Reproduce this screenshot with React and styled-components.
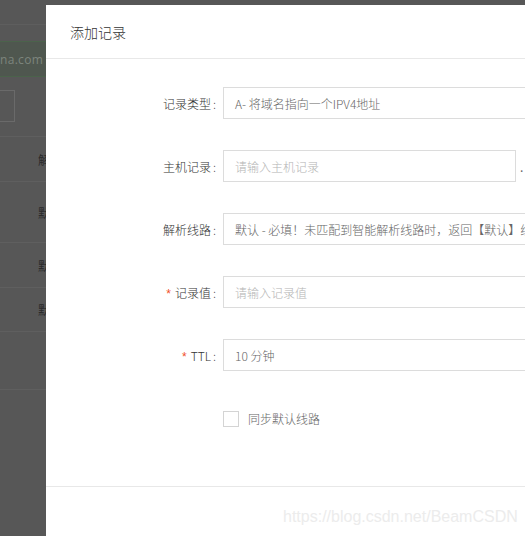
import React from "react";
import styled, { createGlobalStyle } from "styled-components";

const Global = createGlobalStyle`
  html, body { margin: 0; padding: 0; }
  body {
    width: 525px; height: 536px; overflow: hidden;
    font-family: "Noto Sans CJK SC", "Noto Sans", Arial, sans-serif;
    background: #565656;
  }
`;

const Page = styled.div`
  position: relative;
  width: 525px;
  height: 536px;
  overflow: hidden;
  background: #575757;
`;

const BgTop = styled.div`
  height: 24px;
  border-bottom: 1px solid #5e5e5e;
`;

const BgDomain = styled.div`
  margin-top: 16px;
  height: 34px;
  background: #4f574f;
  border-top: 1px solid #4b634b;
  border-bottom: 1px solid #4b634b;
  display: flex;
  align-items: center;
  font-family: "Open Sans", "Liberation Sans", sans-serif;
  font-size: 12px;
  color: #7d857d;
  letter-spacing: 0.3px;
`;

const BgInput = styled.div`
  margin-top: 13px;
  width: 14px;
  height: 30px;
  border: 1px solid #6a6a6a;
  border-left: none;
`;

const BgTable = styled.div`
  margin-top: 14px;
  border-top: 1px solid #5f5f5f;
`;

const BgRow = styled.div`
  height: ${(p) => p.$h}px;
  border-bottom: 1px solid #5f5f5f;
  display: flex;
  align-items: center;
  padding-left: 38px;
  font-size: 12px;
  color: #2a2a2a;
`;

const Overlay = styled.div`
  position: absolute;
  inset: 0;
`;

const Modal = styled.div`
  position: absolute;
  left: 46px;
  top: 5px;
  width: 620px;
  height: 600px;
  background: #fff;
  display: flex;
  flex-direction: column;
`;

const Header = styled.div`
  height: 53px;
  border-bottom: 1px solid #e8e8e8;
  display: flex;
  align-items: center;
  padding-left: 24px;
  font-size: 14px;
  font-weight: 300;
  color: #333;
`;

const Body = styled.div`
  padding-top: 28px;
  height: 427px;
  display: flex;
  flex-direction: column;
  gap: 31px;
  box-sizing: border-box;
`;

const Row = styled.div`
  display: flex;
  align-items: center;
  height: 32px;
`;

const Label = styled.div`
  width: 177px;
  flex-shrink: 0;
  box-sizing: border-box;
  text-align: right;
  padding-right: 7px;
  font-size: 12px;
  font-weight: 300;
  color: #333;
  white-space: nowrap;
`;

const Star = styled.span`
  color: #f0502a;
  margin-right: 4px;
  font-family: "Liberation Sans", Arial, sans-serif;
`;

const Colon = styled.span`
  margin-left: 2px;
`;

const Field = styled.div`
  width: ${(p) => p.$w || 360}px;
  flex-shrink: 0;
  height: 32px;
  box-sizing: border-box;
  border: 1px solid #dcdcdc;
  display: flex;
  align-items: center;
  padding-left: 11px;
  font-size: 12px;
  font-weight: 300;
  color: ${(p) => (p.$ph ? "#b4b4b4" : "#666")};
  white-space: nowrap;
  overflow: hidden;
`;

const Suffix = styled.span`
  margin-left: 4px;
  font-size: 12px;
  color: #666;
`;

const CheckRow = styled.div`
  display: flex;
  align-items: center;
  padding-left: 177px;
  margin-top: 8px;
  gap: 9px;
  font-size: 12px;
  font-weight: 300;
  color: #666;
`;

const Box = styled.span`
  width: 16px;
  height: 16px;
  box-sizing: border-box;
  border: 1px solid #d4d4d4;
  background: #fff;
`;

const Footer = styled.div`
  border-top: 1px solid #e8e8e8;
  height: 60px;
  display: flex;
  padding-left: 237px;
  padding-top: 21px;
  box-sizing: border-box;
  font-family: "Liberation Sans", Arial, sans-serif;
  font-size: 16px;
  color: #ececec;
`;

export default function App() {
  return (
    <>
      <Global />
      <Page>
        <BgTop />
        <BgDomain>na.com</BgDomain>
        <BgInput />
        <BgTable>
          <BgRow $h={44}>解</BgRow>
          <BgRow $h={60}>默</BgRow>
          <BgRow $h={44}>默</BgRow>
          <BgRow $h={43}>默</BgRow>
          <BgRow $h={57} />
        </BgTable>
        <Overlay>
          <Modal>
            <Header>添加记录</Header>
            <Body>
              <Row>
                <Label>记录类型<Colon>:</Colon></Label>
                <Field>A- 将域名指向一个IPV4地址</Field>
              </Row>
              <Row>
                <Label>主机记录<Colon>:</Colon></Label>
                <Field $w={293} $ph>请输入主机记录</Field>
                <Suffix>.</Suffix>
              </Row>
              <Row>
                <Label>解析线路<Colon>:</Colon></Label>
                <Field>默认 - 必填！未匹配到智能解析线路时，返回【默认】线</Field>
              </Row>
              <Row>
                <Label><Star>*</Star>记录值<Colon>:</Colon></Label>
                <Field $ph>请输入记录值</Field>
              </Row>
              <Row>
                <Label><Star>*</Star>TTL<Colon>:</Colon></Label>
                <Field>10 分钟</Field>
              </Row>
              <CheckRow>
                <Box />
                同步默认线路
              </CheckRow>
            </Body>
            <Footer>https://blog.csdn.net/BeamCSDN</Footer>
          </Modal>
        </Overlay>
      </Page>
    </>
  );
}
